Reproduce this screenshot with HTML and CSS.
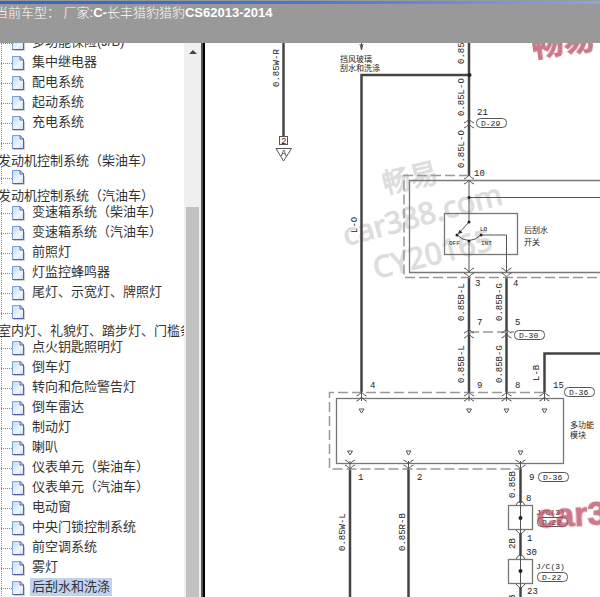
FILE: index.html
```html
<!DOCTYPE html>
<html lang="zh-CN">
<head>
    <meta charset="UTF-8">
    <meta name="viewport" content="width=device-width, initial-scale=1.0">
    <title>电路图</title>
    <link rel="stylesheet" href="styles.css">
</head>
<body>
    <svg class="defs" aria-hidden="true">
        <defs>
            <linearGradient id="paper" x1="0" y1="0" x2="1" y2="1">
                <stop offset="0" stop-color="#b9dcfb"/>
                <stop offset="0.6" stop-color="#eef7ff"/>
                <stop offset="1" stop-color="#c4dcf8"/>
            </linearGradient>
            <symbol id="page" viewBox="0 0 13 15">
                <path d="M1.5 14.5h11v-9" fill="none" stroke="#ccc"/>
                <path d="M.5 .5h7.5l3.500 3.500v9.500h-11z" fill="url(#paper)" stroke="#7f9fd6"/>
                <path d="M.5 13.500h11v-9.500" fill="none" stroke="#5b5f9f"/>
                <path d="M8 .5v3.500h3.500z" fill="#fff" stroke="#5b5f9f"/>
            </symbol>
        </defs>
    </svg>

    <header class="topbar">
        <p class="model">当前车型： 厂家:<b>C-</b>长丰猎豹猎豹<b>CS62013-2014</b></p>
    </header>

    <div class="content">
        <nav class="tree">
            <ul class="list">
                <li><svg class="icon"><use href="#page"/></svg><a href="#">多功能保险(J/B)</a></li>
                <li><svg class="icon"><use href="#page"/></svg><a href="#">集中继电器</a></li>
                <li><svg class="icon"><use href="#page"/></svg><a href="#">配电系统</a></li>
                <li><svg class="icon"><use href="#page"/></svg><a href="#">起动系统</a></li>
                <li><svg class="icon"><use href="#page"/></svg><a href="#">充电系统</a></li>
                <li class="wrap"><svg class="icon"><use href="#page"/></svg><a href="#">发动机控制系统（柴油车）</a></li>
                <li class="wrap"><svg class="icon"><use href="#page"/></svg><a href="#">发动机控制系统（汽油车）</a></li>
                <li><svg class="icon"><use href="#page"/></svg><a href="#">变速箱系统（柴油车）</a></li>
                <li><svg class="icon"><use href="#page"/></svg><a href="#">变速箱系统（汽油车）</a></li>
                <li><svg class="icon"><use href="#page"/></svg><a href="#">前照灯</a></li>
                <li><svg class="icon"><use href="#page"/></svg><a href="#">灯监控蜂鸣器</a></li>
                <li><svg class="icon"><use href="#page"/></svg><a href="#">尾灯、示宽灯、牌照灯</a></li>
                <li class="wrap"><svg class="icon"><use href="#page"/></svg><a href="#">室内灯、礼貌灯、踏步灯、门槛条</a></li>
                <li><svg class="icon"><use href="#page"/></svg><a href="#">点火钥匙照明灯</a></li>
                <li><svg class="icon"><use href="#page"/></svg><a href="#">倒车灯</a></li>
                <li><svg class="icon"><use href="#page"/></svg><a href="#">转向和危险警告灯</a></li>
                <li><svg class="icon"><use href="#page"/></svg><a href="#">倒车雷达</a></li>
                <li><svg class="icon"><use href="#page"/></svg><a href="#">制动灯</a></li>
                <li><svg class="icon"><use href="#page"/></svg><a href="#">喇叭</a></li>
                <li><svg class="icon"><use href="#page"/></svg><a href="#">仪表单元（柴油车）</a></li>
                <li><svg class="icon"><use href="#page"/></svg><a href="#">仪表单元（汽油车）</a></li>
                <li><svg class="icon"><use href="#page"/></svg><a href="#">电动窗</a></li>
                <li><svg class="icon"><use href="#page"/></svg><a href="#">中央门锁控制系统</a></li>
                <li><svg class="icon"><use href="#page"/></svg><a href="#">前空调系统</a></li>
                <li><svg class="icon"><use href="#page"/></svg><a href="#">雾灯</a></li>
                <li><svg class="icon"><use href="#page"/></svg><a href="#" class="active">后刮水和洗涤</a></li>
            </ul>
        </nav>
        <div class="scrollbar">
            <div class="arrow"></div>
            <div class="thumb"></div>
        </div>

        <main class="diagram">
            <svg class="sheet" width="395" height="554" viewBox="205 43 395 554">
                <defs>
                    <!-- connector: two arrow heads, tip at 0,0 -->
                    <g id="up">
                        <path d="M-5 4Q-2 3 0 0Q2 3 5 4M-5 9Q-2 8 0 5Q2 8 5 9"/>
                    </g>
                    <g id="down">
                        <path d="M-5 -4Q-2 -3 0 0Q2 -3 5 -4M-5 -9Q-2 -8 0 -5Q2 -8 5 -9"/>
                    </g>
                    <path id="tri" d="M-2.500 -2h5l-2.500 4z"/>
                    <rect id="cap" width="30" height="9" rx="4"/>
                </defs>

                <!-- watermarks -->
                <g class="mark">
                    <text transform="translate(385 194) rotate(-13)" font-size="28">畅易</text>
                    <text transform="translate(346 246) rotate(-15)" font-size="30">car388.com</text>
                    <text transform="translate(376 279) rotate(-14)" font-size="30">CY20165</text>
                </g>

                <!-- wires -->
                <g class="wire">
                    <path d="M283.500 43V136"/>
                    <path d="M361.500 392V75H469"/>
                    <path d="M469 43V176M469 278V392"/>
                    <path d="M506.500 278V392"/>
                    <path d="M544.500 392V353.500H600"/>
                    <path d="M350 469V597M408.500 469V597"/>
                    <path d="M520.500 469V503M520.500 533V556M520.500 587V597"/>
                </g>

                <g class="frame">
                    <path d="M600 180.500H409.500V272.500H600"/>
                    <rect x="336.500" y="398.500" width="227" height="65"/>
                    <rect x="444.500" y="213.500" width="73" height="41"/>
                    <rect x="508.500" y="505.500" width="24" height="24"/>
                    <rect x="508.500" y="559.500" width="24" height="24"/>
                </g>

                <g class="dash">
                    <path d="M469 175.500H404V277.500H600"/>
                    <path d="M544 392.500H329.500V469H520"/>
                    <path d="M469 332H514"/>
                </g>

                <g class="thin">
                    <path d="M361.500 43V50M360 44L361.500 50L363 44"/>
                    <rect x="279.500" y="136.500" width="8" height="8"/>
                    <path d="M276 148.500H291.500L283.500 161Z"/>
                    <path d="M469 181V222L459 233M469 197.500H600"/>
                    <path d="M457 235Q469 246 481 235H506.500V272M469 241V272"/>
                    <path d="M520.500 503V533M520.500 556V587"/>
                    <path d="M361.500 392V401M469 392V401M506.500 392V401M544.500 392V401"/>
                    <path d="M350 461V469M408.500 461V469M520.500 461V469"/>
                    <use href="#up" x="469" y="119"/>
                    <use href="#up" x="469" y="175"/>
                    <use href="#down" x="469" y="277"/>
                    <use href="#down" x="506.500" y="277"/>
                    <use href="#up" x="469" y="329"/>
                    <use href="#up" x="506.500" y="329"/>
                    <use href="#up" x="361.500" y="392"/>
                    <use href="#up" x="469" y="392"/>
                    <use href="#up" x="506.500" y="392"/>
                    <use href="#up" x="544.500" y="392"/>
                    <use href="#down" x="350" y="469"/>
                    <use href="#down" x="408.500" y="469"/>
                    <use href="#down" x="520.500" y="469"/>
                    <path d="M516 505Q518 501 520.500 501Q523 501 525 505M516 530Q518 533 520.500 534Q523 533 525 530"/>
                    <path d="M516 559Q518 555 520.500 555Q523 555 525 559M516 584Q518 587 520.500 588Q523 587 525 584"/>
                    <use href="#tri" x="361.500" y="411"/>
                    <use href="#tri" x="469" y="411"/>
                    <use href="#tri" x="506.500" y="411"/>
                    <use href="#tri" x="544.500" y="411"/>
                    <use href="#tri" x="350" y="453"/>
                    <use href="#tri" x="408.500" y="453"/>
                    <use href="#tri" x="520.500" y="453"/>
                    <use href="#cap" x="476.500" y="118.500"/>
                    <use href="#cap" x="514.500" y="330.500"/>
                    <use href="#cap" x="564.500" y="387.500"/>
                    <use href="#cap" x="538.500" y="472.500"/>
                    <use href="#cap" x="537.500" y="517.500"/>
                    <use href="#cap" x="537.500" y="572.500"/>
                </g>

                <g class="dot">
                    <circle cx="469.500" cy="75" r="2"/>
                    <circle cx="469" cy="197.500" r="1.500"/>
                    <circle cx="469" cy="222" r="1.500"/>
                    <circle cx="457" cy="235" r="1.500"/>
                    <circle cx="481" cy="235" r="1.500"/>
                    <circle cx="469" cy="241" r="1.500"/>
                    <path d="M458 234l1.500 -4l3 2.500z"/>
                    <circle cx="520.500" cy="518" r="2"/>
                    <circle cx="520.500" cy="571" r="2"/>
                </g>

                <!-- wire codes, read bottom to top -->
                <g class="code">
                    <text transform="translate(279 87) rotate(-90)">0.85W-R</text>
                    <text transform="translate(357 233) rotate(-90)">L-O</text>
                    <text transform="translate(464 64) rotate(-90)">0.85L-O</text>
                    <text transform="translate(464 116) rotate(-90)">0.85L-O</text>
                    <text transform="translate(464 168) rotate(-90)">0.85L-O</text>
                    <text transform="translate(464 321) rotate(-90)">0.85B-L</text>
                    <text transform="translate(502 321) rotate(-90)">0.85B-G</text>
                    <text transform="translate(464 383) rotate(-90)">0.85B-L</text>
                    <text transform="translate(502 383) rotate(-90)">0.85B-G</text>
                    <text transform="translate(539 381) rotate(-90)">L-B</text>
                    <text transform="translate(345 551) rotate(-90)">0.85W-L</text>
                    <text transform="translate(405 551) rotate(-90)">0.85R-B</text>
                    <text transform="translate(515 498) rotate(-90)">0.85B</text>
                    <text transform="translate(515 549) rotate(-90)">2B</text>
                    <text transform="translate(515 600) rotate(-90)">B</text>
                </g>

                <!-- pin numbers -->
                <g class="pin">
                    <text x="281" y="144">2</text>
                    <text x="281" y="156">A</text>
                    <text x="477" y="115">21</text>
                    <text x="474" y="176">10</text>
                    <text x="475" y="286">3</text>
                    <text x="513" y="286">4</text>
                    <text x="477" y="325">7</text>
                    <text x="515" y="325">5</text>
                    <text x="370" y="388">4</text>
                    <text x="477" y="388">9</text>
                    <text x="515" y="388">8</text>
                    <text x="553" y="388">15</text>
                    <text x="358" y="480">1</text>
                    <text x="417" y="480">2</text>
                    <text x="529" y="480">9</text>
                    <text x="526" y="501">8</text>
                    <text x="527" y="541">1</text>
                    <text x="526" y="555">30</text>
                    <text x="527" y="594">23</text>
                </g>
                <g class="pin label">
                    <text x="481" y="126">D-29</text>
                    <text x="519" y="338">D-30</text>
                    <text x="569" y="395">D-36</text>
                    <text x="543" y="480">D-36</text>
                    <text x="542" y="525">D-22</text>
                    <text x="542" y="580">D-22</text>
                    <text x="536" y="515">J/C(3)</text>
                    <text x="536" y="569">J/C(3)</text>
                </g>
                <g class="contact">
                    <text x="449" y="245">OFF</text>
                    <text x="480" y="231">LO</text>
                    <text x="481" y="245">INT</text>
                </g>

                <g class="name">
                    <text x="340" y="62">挡风玻璃</text>
                    <text x="340" y="71">刮水和洗涤</text>
                    <text x="524" y="233">后刮水</text>
                    <text x="524" y="245">开关</text>
                    <text x="570" y="428">多功能</text>
                    <text x="570" y="438">模块</text>
                </g>

                <g class="stamp">
                    <text transform="translate(533 57) rotate(-8)" font-size="32">畅易</text>
                    <text transform="translate(537 528) rotate(-3)" font-size="34">car388</text>
                </g>
            </svg>
        </main>
    </div>
</body>
</html>
```
FILE: styles.css
```css
body {
    margin: 0;
    height: 100vh;
    display: flex;
    flex-direction: column;
    overflow: hidden;
    background-color: #fff;
    font-family: "Liberation Sans", "Noto Sans CJK SC", sans-serif;
    font-size: 13px;
    color: #333;
}

.defs {
    position: absolute;
    width: 0;
    height: 0;
}

/* Top bar */
.topbar {
    flex: none;
    height: 38px;
    border-top: 1px solid #999;
    background: linear-gradient(to right, #3465c0, #4a76cc 50%, #8aa5e0) top / 100% 3px no-repeat #999;
    padding-top: 4px;
    overflow: hidden;
}

.model {
    margin: 0 0 0 -5px;
    line-height: 16px;
    font-weight: 300;
    color: #fff;
    white-space: nowrap;
}

.model b {
    font-weight: bold;
}

.content {
    flex: 1;
    min-height: 0;
    display: flex;
}

/* Menu tree */
.tree {
    flex: none;
    width: 184px;
    overflow: hidden;
}

.list {
    list-style: none;
    margin: -11px 0 0;
    padding: 0;
}

.list li {
    display: flex;
    align-items: center;
    height: 20px;
    padding-left: 12px;
    white-space: nowrap;
    background:
        repeating-linear-gradient(to bottom, #888 0 1px, transparent 1px 2px) 1px 0 / 1px 100% no-repeat,
        repeating-linear-gradient(to right, #888 0 1px, transparent 1px 2px) 1px 11px / 11px 1px no-repeat;
}

.list a {
    margin-left: 5px;
    padding: 0 2px;
    line-height: 18px;
    color: #333;
    text-decoration: none;
}

.list a.active {
    background-color: #c1d2ee;
}

.icon {
    flex: none;
    width: 13px;
    height: 15px;
    margin-top: 3px;
}

/* Long names drop below their icon */
.list .wrap {
    flex-direction: column;
    align-items: flex-start;
    height: 35px;
    background-size: 1px 17px, 11px 1px;
}

.wrap a {
    margin-left: -16px;
    line-height: 22px;
}

/* Scrollbar */
.scrollbar {
    flex: none;
    width: 17px;
    display: flex;
    flex-direction: column;
    align-items: center;
    background-color: #f0f0f0;
}

.arrow {
    margin-top: 7px;
    border: 4px solid transparent;
    border-top: 0;
    border-bottom-color: #444;
}

.thumb {
    flex: 1;
    width: 13px;
    margin-top: 153px;
    background-color: #c1c1c1;
}

/* Wiring diagram */
.diagram {
    flex: 1;
    min-width: 0;
    overflow: hidden;
    border-left: 2px solid #555;
    box-shadow: inset 2px 0 0 #000;
    padding-left: 2px;
}

.sheet {
    display: block;
}

.wire {
    fill: none;
    stroke: #444;
    stroke-width: 2.5;
}

.frame {
    fill: none;
    stroke: #777;
    stroke-width: 1.3;
}

.dash {
    fill: none;
    stroke: #999;
    stroke-width: 1.5;
    stroke-dasharray: 10 4;
}

.thin {
    fill: none;
    stroke: #555;
    stroke-width: 1;
}

.dot {
    fill: #222;
}

.code,
.pin,
.contact {
    font-family: "Liberation Mono", monospace;
    font-size: 9px;
    fill: #222;
}

.label {
    font-size: 8px;
}

.contact {
    font-size: 6px;
}

.name {
    font-family: "Noto Sans CJK SC", sans-serif;
    font-size: 8px;
    fill: #222;
}

.mark {
    font-family: "Noto Sans", "Noto Sans CJK SC", sans-serif;
    fill: #ddd;
    stroke: #ddd;
    stroke-width: 1;
}

.stamp {
    font-family: "Liberation Sans", "Noto Sans CJK SC", sans-serif;
    font-weight: bold;
    fill: #b84d64;
    stroke: #b84d64;
    stroke-width: 1;
    stroke-linejoin: round;
    opacity: 0.75;
}
```
